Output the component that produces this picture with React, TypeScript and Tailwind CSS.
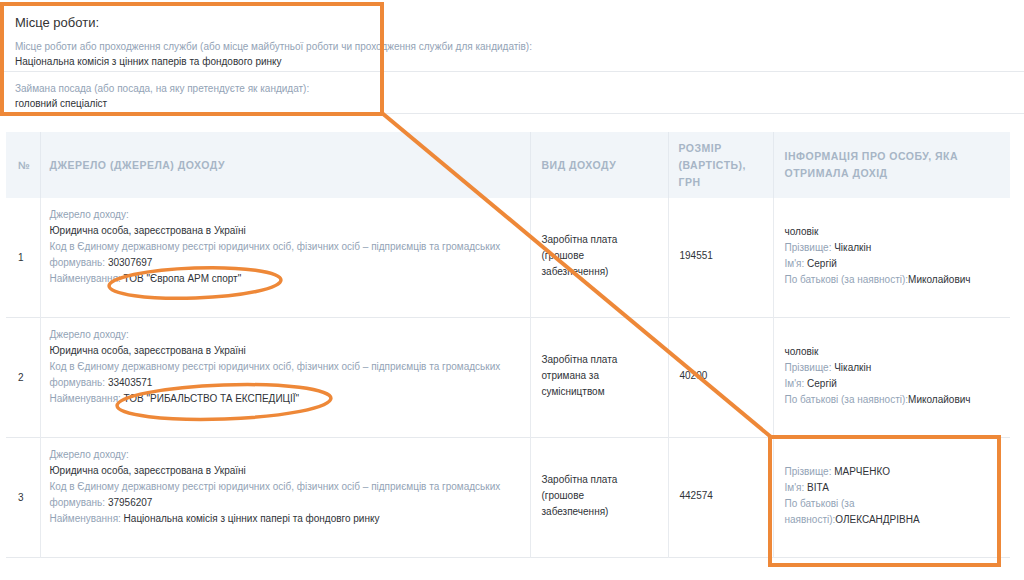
const label = "text-[#93a3b6]"
const value = "text-[#2f3338]"

type Row = {
  n: string
  code: string
  name: string
  kind: string[]
  amount: string
  spouse: boolean
  last: string
  first: string
  middle: string
}

const rows: Row[] = [
  {
    n: "1",
    code: "30307697",
    name: "ТОВ \"Європа АРМ спорт\"",
    kind: ["Заробітна плата", "(грошове", "забезпечення)"],
    amount: "194551",
    spouse: true,
    last: "Чікалкін",
    first: "Сергій",
    middle: "Миколайович",
  },
  {
    n: "2",
    code: "33403571",
    name: "ТОВ \"РИБАЛЬСТВО ТА ЕКСПЕДИЦІЇ\"",
    kind: ["Заробітна плата", "отримана за", "сумісництвом"],
    amount: "40200",
    spouse: true,
    last: "Чікалкін",
    first: "Сергій",
    middle: "Миколайович",
  },
  {
    n: "3",
    code: "37956207",
    name: "Національна комісія з цінних папері та фондовго ринку",
    kind: ["Заробітна плата", "(грошове", "забезпечення)"],
    amount: "442574",
    spouse: false,
    last: "МАРЧЕНКО",
    first: "ВІТА",
    middle: "ОЛЕКСАНДРІВНА",
  },
]

const App = () => {
  return (
    <div className="relative w-[1024px] h-[580px] overflow-hidden bg-white font-['Liberation_Sans',Arial,sans-serif] text-[10px] leading-[15px]">
      {/* work place block */}
      <div className="pt-[15px]">
        <div className="pl-[15px] text-[13px] leading-[16px] text-[#333]">Місце роботи:</div>
        <div className="pl-[15px] pt-[8px] pb-[2px] border-b border-[#e6e9ed]">
          <div className={label}>
            Місце роботи або проходження служби (або місце майбутньої роботи чи проходження служби для кандидатів):
          </div>
          <div className={value}>Національна комісія з цінних паперів та фондового ринку</div>
        </div>
        <div className="pl-[15px] pt-[9px] pb-[2px] border-b border-[#e6e9ed]">
          <div className={label}>Займана посада (або посада, на яку претендуєте як кандидат):</div>
          <div className={value}>головний спеціаліст</div>
        </div>
      </div>

      {/* income table */}
      <table className="mt-[18px] ml-[6px] w-[1004px] border-collapse table-fixed">
        <colgroup>
          <col className="w-[34px]" />
          <col className="w-[490px]" />
          <col className="w-[138px]" />
          <col className="w-[105px]" />
          <col className="w-[237px]" />
        </colgroup>
        <thead>
          <tr className="bg-[#f1f5f9] h-[66px] text-left align-middle text-[10.5px] leading-[17px] font-bold tracking-[0.5px] text-[#a7b5c6]">
            <th className="pl-[12px] font-bold">№</th>
            <th className="pl-[9px] border-l border-[#e4e9ef] font-bold">ДЖЕРЕЛО (ДЖЕРЕЛА) ДОХОДУ</th>
            <th className="pl-[11px] border-l border-[#e4e9ef] font-bold">ВИД ДОХОДУ</th>
            <th className="pl-[10px] pr-[6px] border-l border-[#e4e9ef] font-bold">РОЗМІР (ВАРТІСТЬ), ГРН</th>
            <th className="pl-[11px] pr-[16px] border-l border-[#e4e9ef] font-bold">ІНФОРМАЦІЯ ПРО ОСОБУ, ЯКА ОТРИМАЛА ДОХІД</th>
          </tr>
        </thead>
        <tbody className="leading-[16px]">
          {rows.map((r) => (
            <tr key={r.n} className="border-b border-[#e6e9ed] align-middle">
              <td className={`pl-[12px] ${value}`}>{r.n}</td>
              <td className="pl-[9px] pr-[10px] pt-[9px] pb-[30px] border-l border-[#e8ebef] align-top">
                <div className={label}>Джерело доходу:</div>
                <div className={value}>Юридична особа, зареєстрована в Україні</div>
                <div className={label}>
                  Код в Єдиному державному реєстрі юридичних осіб, фізичних осіб – підприємців та громадських формувань:{" "}
                  <span className={value}>{r.code}</span>
                </div>
                <div className={label}>
                  Найменування: <span className={value}>{r.name}</span>
                </div>
              </td>
              <td className={`pl-[11px] pb-[4px] border-l border-[#e8ebef] ${value}`}>
                {r.kind.map((k) => (
                  <div key={k}>{k}</div>
                ))}
              </td>
              <td className={`pl-[11px] pb-[4px] border-l border-[#e8ebef] ${value}`}>{r.amount}</td>
              <td className="pl-[11px] pr-[22px] pb-[4px] border-l border-[#e8ebef]">
                {r.spouse && <div className={value}>чоловік</div>}
                <div className={label}>
                  Прізвище: <span className={value}>{r.last}</span>
                </div>
                <div className={label}>
                  Ім'я: <span className={value}>{r.first}</span>
                </div>
                <div className={label}>
                  По батькові (за наявності):<span className={value}>{r.middle}</span>
                </div>
              </td>
            </tr>
          ))}
        </tbody>
      </table>

      {/* annotations drawn over the page */}
      <svg className="absolute inset-0 pointer-events-none" width="1024" height="580" viewBox="0 0 1024 580">
        <g fill="none" stroke="#ee8838" strokeWidth="4">
          <rect x="2" y="4" width="380" height="110" />
          <line x1="382" y1="113" x2="771" y2="437" />
          <rect x="770" y="437" width="229" height="128" />
          <ellipse cx="195" cy="283" rx="86" ry="15" strokeWidth="3.5" transform="rotate(-2 195 283)" />
          <ellipse cx="224" cy="402" rx="107" ry="17" strokeWidth="3.5" transform="rotate(-2 224 402)" />
        </g>
      </svg>
    </div>
  )
}

export default App
